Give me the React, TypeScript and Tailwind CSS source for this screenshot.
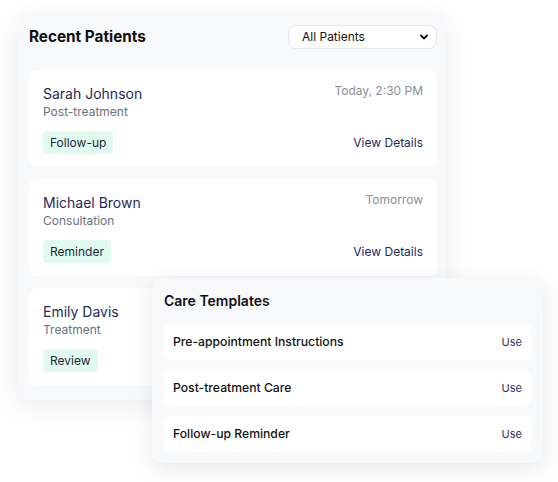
import React from "react";

const patients = [
  { name: "Sarah Johnson", kind: "Post-treatment", tag: "Follow-up", when: "Today, 2:30 PM" },
  { name: "Michael Brown", kind: "Consultation", tag: "Reminder", when: "Tomorrow" },
  { name: "Emily Davis", kind: "Treatment", tag: "Review", when: "" },
];

const templates = ["Pre-appointment Instructions", "Post-treatment Care", "Follow-up Reminder"];

export default function App() {
  return (
    <div className="relative w-[558px] h-[482px] bg-white font-['Inter',sans-serif]">
      <div className="absolute left-[17px] top-[13px] w-[429px] rounded-xl bg-[#f8f9fb] pl-3 pr-[9px] pt-3 pb-[15px] shadow-[0_6px_24px_rgba(15,23,42,0.08)]">
        <div className="flex items-center justify-between h-[24px] mb-[21px]">
          <h2 className="text-[15.3px] font-bold text-[#111111]">Recent Patients</h2>
          <div className="flex items-center justify-between w-[149px] h-[24px] rounded-lg border border-[#e5e7eb] bg-white pl-[13px] pr-[7px] text-[12px] text-[#111111]">
            <span>All Patients</span>
            <svg width="10" height="10" viewBox="0 0 10 10" fill="none">
              <path d="M2 3.5 5 6.5 8 3.5" stroke="#111" strokeWidth="1.8" strokeLinecap="round" strokeLinejoin="round" />
            </svg>
          </div>
        </div>
        <div className="flex flex-col gap-3">
          {patients.map((p) => (
            <div key={p.name} className="h-[97px] rounded-lg bg-white px-[14px] pt-[14px]">
              <div className="flex items-start justify-between">
                <div className="flex flex-col">
                  <span className="text-[14px] leading-5 text-[#1f2a5c]">{p.name}</span>
                  <span className="text-[12px] leading-[15px] text-[#6b7280]">{p.kind}</span>
                </div>
                <span className="-mt-[3px] text-[12px] leading-5 text-[#8a8f98]">{p.when}</span>
              </div>
              <div className="mt-[12px] flex items-center justify-between">
                <span className="flex h-[23px] items-center rounded-[4px] bg-[#e1faf0] px-[7px] text-[12px] text-[#1f2937]">{p.tag}</span>
                <span className="text-[12px] text-[#1f2a5c]">View Details</span>
              </div>
            </div>
          ))}
        </div>
      </div>

      <div className="absolute left-[152px] top-[278px] w-[391px] rounded-[10px] bg-[#f8f9fb] px-3 pt-[12px] pb-[11px] shadow-[0_6px_24px_rgba(15,23,42,0.09)]">
        <h3 className="mb-[12px] text-[14px] leading-[22px] font-semibold text-[#111111]">Care Templates</h3>
        <div className="flex flex-col gap-[10px]">
          {templates.map((t) => (
            <div key={t} className="flex h-[36px] items-center justify-between rounded-md bg-white px-[9px]">
              <span className="text-[12.2px] font-medium text-[#111111]">{t}</span>
              <span className="text-[11px] text-[#2b3566]">Use</span>
            </div>
          ))}
        </div>
      </div>
    </div>
  );
}
